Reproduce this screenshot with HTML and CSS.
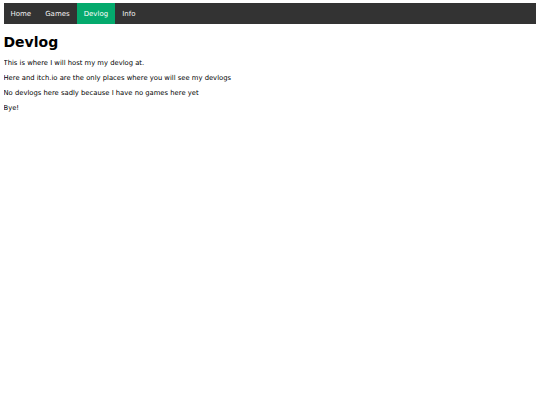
FILE: index.html
```html
<!DOCTYPE html>
<html>
<head>
    <title>Devlog</title>
    <link rel="stylesheet" href="styles.css">
</head>
<body>
    <!-- Top navigation -->
    <ul class="topnav">
        <li><a href="#">Home</a></li>
        <li><a href="#">Games</a></li>
        <li><a class="active" href="#">Devlog</a></li>
        <li><a href="#">Info</a></li>
    </ul>

    <h1>Devlog</h1>
    <p>This is where I will host my my devlog at.</p>
    <p>Here and itch.io are the only places where you will see my devlogs</p>
    <p>No devlogs here sadly because I have no games here yet</p>
    <p>Bye!</p>
</body>
</html>
```

FILE: styles.css
```css
body {
    font-family: Verdana, 'DejaVu Sans', sans-serif;
    font-size: 6.8px;
    margin: 3px 4px 3px 3.5px;
    color: #000;
    background-color: white;
}

.topnav {
    list-style-type: none;
    margin: 0;
    padding: 0;
    overflow: hidden;
    background-color: #333;
}

.topnav li {
    float: left;
}

.topnav li a {
    display: block;
    color: #f2f2f2;
    text-align: center;
    padding: 6.5px 7px;
    text-decoration: none;
    font-size: 7px;
}

.topnav li a:hover {
    background-color: #111;
}

.topnav li a.active {
    background-color: #04AA6D;
    color: white;
}

h1 {
    font-size: 14px;
    margin: 9.5px 0;
}

p {
    margin: 7px 0;
}
```
